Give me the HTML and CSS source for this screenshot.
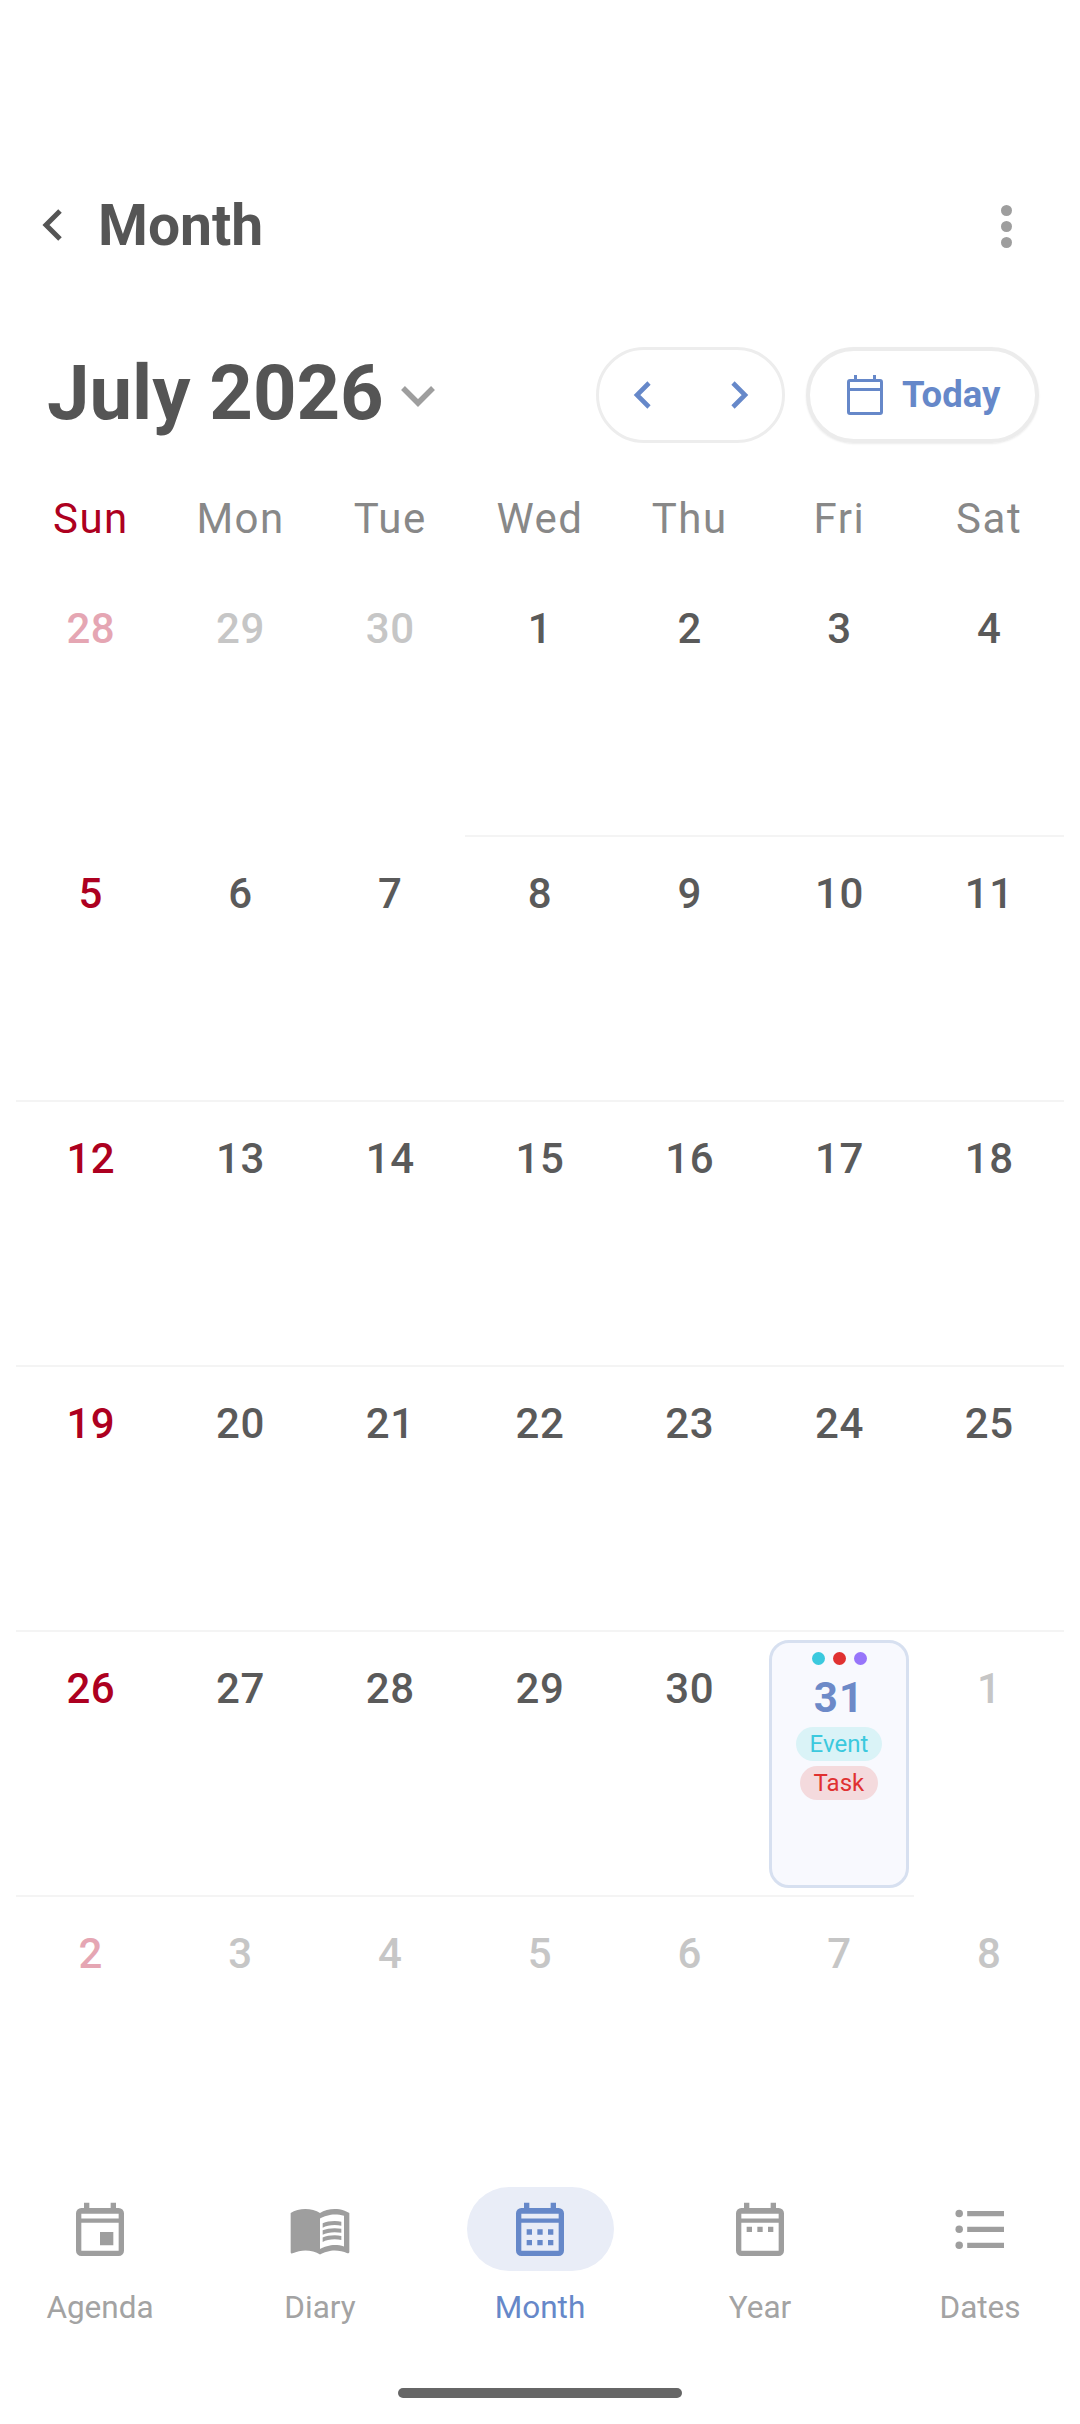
FILE: index.html
```html
<!DOCTYPE html>
<html lang="en">
<head>
<meta charset="utf-8">
<title>Month</title>
<link rel="stylesheet" href="styles.css">
</head>
<body>
<div class="app">
  <header class="titlebar">
    <svg class="back" viewBox="0 0 30 36"><path d="M19 3 5 17l14 14" fill="none" stroke="#555" stroke-width="5"/></svg>
    <h1 class="title">Month</h1>
    <div class="more"><i></i><i></i><i></i></div>
  </header>

  <section class="toolbar">
    <div class="month-pick">
      <span class="month-name">July 2026</span>
      <svg class="caret" viewBox="0 0 34 22"><path d="M2 3l15 15L32 3" fill="none" stroke="#9e9e9e" stroke-width="5.5"/></svg>
    </div>
    <div class="pager">
      <svg class="pg" viewBox="0 0 18 28"><path d="M16 2 4 14l12 12" fill="none" stroke="#6688c9" stroke-width="4.6"/></svg>
      <svg class="pg" viewBox="0 0 18 28"><path d="M2 2l12 12L2 26" fill="none" stroke="#6688c9" stroke-width="4.6"/></svg>
    </div>
    <div class="today">
      <svg class="today-ic" viewBox="0 0 36 40"><path fill-rule="evenodd" fill="#6688c9" d="M7 0h3v4h16V0h3v4h4a3 3 0 0 1 3 3v30a3 3 0 0 1-3 3H3a3 3 0 0 1-3-3V7a3 3 0 0 1 3-3h4zM3 7v6h30V7zM3 16v21h30V16z"/></svg>
      <span class="today-text">Today</span>
    </div>
  </section>

  <section class="weekdays">
    <span class="sun">Sun</span><span>Mon</span><span>Tue</span><span>Wed</span><span>Thu</span><span>Fri</span><span>Sat</span>
  </section>

  <section class="grid">
    <div class="cell nl sundim">28</div><div class="cell nl dim">29</div><div class="cell nl dim">30</div><div class="cell">1</div><div class="cell">2</div><div class="cell">3</div><div class="cell">4</div>
    <div class="cell sun">5</div><div class="cell">6</div><div class="cell">7</div><div class="cell">8</div><div class="cell">9</div><div class="cell">10</div><div class="cell">11</div>
    <div class="cell sun">12</div><div class="cell">13</div><div class="cell">14</div><div class="cell">15</div><div class="cell">16</div><div class="cell">17</div><div class="cell">18</div>
    <div class="cell sun">19</div><div class="cell">20</div><div class="cell">21</div><div class="cell">22</div><div class="cell">23</div><div class="cell">24</div><div class="cell">25</div>
    <div class="cell sun">26</div><div class="cell">27</div><div class="cell">28</div><div class="cell">29</div><div class="cell">30</div>
    <div class="cell has-card">
      <div class="card">
        <div class="dots"><i class="cyan"></i><i class="red"></i><i class="violet"></i></div>
        <div class="card-num">31</div>
        <span class="tag tag-event">Event</span>
        <span class="tag tag-task">Task</span>
      </div>
    </div>
    <div class="cell nl dim">1</div>
    <div class="cell nl sundim">2</div><div class="cell nl dim">3</div><div class="cell nl dim">4</div><div class="cell nl dim">5</div><div class="cell nl dim">6</div><div class="cell nl dim">7</div><div class="cell nl dim">8</div>
  </section>

  <nav class="nav">
    <div class="tab">
      <div class="ic-wrap"><svg class="ic" viewBox="0 0 24 24"><path fill-rule="evenodd" d="M6 1h2v2h8V1h2v2h1a2 2 0 0 1 2 2v14a2 2 0 0 1-2 2H5a2 2 0 0 1-2-2V5a2 2 0 0 1 2-2h1zM5 5.2v1.7h14V5.2zM5 8.5V19h14V8.5zM12 12h5v5h-5z"/></svg></div>
      <span>Agenda</span>
    </div>
    <div class="tab">
      <div class="ic-wrap"><svg class="ic" viewBox="0 0 24 24"><g transform="translate(0 -1.1)"><path d="M12 6C10.55 4.9 8.45 4.5 6.5 4.5S2.45 4.9 1 6v14.65c0 .25.25.5.5.5.1 0 .15-.05.25-.05C3.1 20.45 5.05 20 6.5 20c1.95 0 4.05.4 5.5 1.5z"/><path d="M21 5c-1.11-.35-2.33-.5-3.5-.5-1.95 0-4.05.4-5.5 1.5v15.5c1.35-.85 3.8-1.5 5.5-1.5 1.65 0 3.35.3 4.75 1.05.1.05.15.05.25.05.25 0 .5-.25.5-.5V6c-.6-.45-1.25-.75-2-1zm0 13.5c-1.1-.35-2.3-.5-3.5-.5-1.7 0-4.15.65-5.5 1.5V8c1.35-.85 3.8-1.5 5.5-1.5 1.2 0 2.4.15 3.5.5z"/><path d="M17.5 10.5c.88 0 1.73.09 2.5.26V9.24c-.79-.15-1.64-.24-2.5-.24-1.7 0-3.24.29-4.5.83v1.66c1.13-.64 2.7-.99 4.5-.99zM13 12.49v1.66c1.13-.64 2.7-.99 4.5-.99.88 0 1.73.09 2.5.26V11.9c-.79-.15-1.64-.24-2.5-.24-1.7 0-3.24.3-4.5.83zM17.5 14.33c-1.7 0-3.24.29-4.5.83v1.66c1.13-.64 2.7-.99 4.5-.99.88 0 1.73.09 2.5.26v-1.52c-.79-.16-1.64-.24-2.5-.24z"/></g></svg></div>
      <span>Diary</span>
    </div>
    <div class="tab active">
      <div class="ic-wrap"><svg class="ic" viewBox="0 0 24 24"><path fill-rule="evenodd" d="M6 1h2v2h8V1h2v2h1a2 2 0 0 1 2 2v14a2 2 0 0 1-2 2H5a2 2 0 0 1-2-2V5a2 2 0 0 1 2-2h1zM5 5.2v1.7h14V5.2zM5 8.5V19h14V8.5zM7 11h2v2H7zM11 11h2v2h-2zM15 11h2v2h-2zM7 15h2v2H7zM11 15h2v2h-2zM15 15h2v2h-2z"/></svg></div>
      <span>Month</span>
    </div>
    <div class="tab">
      <div class="ic-wrap"><svg class="ic" viewBox="0 0 24 24"><path fill-rule="evenodd" d="M6 1h2v2h8V1h2v2h1a2 2 0 0 1 2 2v14a2 2 0 0 1-2 2H5a2 2 0 0 1-2-2V5a2 2 0 0 1 2-2h1zM5 5.2v1.7h14V5.2zM5 8.5V19h14V8.5zM7 10h2v2H7zM11 10h2v2h-2zM15 10h2v2h-2z"/></svg></div>
      <span>Year</span>
    </div>
    <div class="tab">
      <div class="ic-wrap"><svg class="ic" viewBox="0 0 24 24"><circle cx="4.2" cy="5.1" r="1.4"/><circle cx="4.2" cy="11" r="1.4"/><circle cx="4.2" cy="17" r="1.4"/><path d="M7.2 4.1H21v2H7.2zM7.2 10H21v2H7.2zM7.2 16H21v2H7.2z"/></svg></div>
      <span>Dates</span>
    </div>
  </nav>
  <div class="home"></div>
</div>
</body>
</html>
```
FILE: styles.css
```css
* { box-sizing: border-box; }
html, body { margin: 0; padding: 0; background: #fff; }
body { font-family: Roboto, "Liberation Sans", sans-serif; color: #555; }
.app { width: 1080px; height: 2424px; display: flex; flex-direction: column; overflow: hidden; }

.titlebar { margin-top: 176px; height: 100px; display: flex; align-items: center; padding: 0 68px 0 41px; }
.back { width: 30px; height: 36px; flex: none; }
.title { margin: 0 0 0 27px; font-size: 57px; font-weight: 700; line-height: 100px; color: #555; flex: 1; }
.more { display: flex; flex-direction: column; gap: 5px; }
.more i { display: block; width: 11px; height: 11px; border-radius: 50%; background: #9e9e9e; }

.toolbar { margin-top: 71px; height: 96px; display: flex; align-items: center; padding: 0 41px 0 47px; }
.month-pick { display: flex; align-items: center; flex: 1; }
.month-name { font-size: 76px; font-weight: 700; line-height: 92px; margin-bottom: 4px; color: #555; }
.caret { width: 34px; height: 22px; margin-left: 17px; margin-top: 2px; }
.pager { width: 189.5px; height: 96px; border: 3px solid #ededed; border-radius: 48px; display: flex; align-items: center; justify-content: space-between; padding: 0 33px 0 34px; }
.pg { width: 18px; height: 28px; }
.today { width: 233px; height: 96px; margin-left: 21px; border: 4px solid #ececec; border-radius: 48px; box-shadow: 0 1px 2px rgba(0,0,0,.08); display: flex; align-items: center; padding-left: 37px; color: #6688c9; font-size: 36.5px; font-weight: 700; }
.today-ic { width: 36px; height: 40px; margin-right: 19px; }
.today-text { margin-bottom: 2px; }

.weekdays { margin-top: 45.5px; height: 60px; margin-bottom: 23px; padding: 0 16px; display: grid; grid-template-columns: repeat(7, 1fr); text-align: center; font-size: 42px; line-height: 60px; letter-spacing: 1.5px; color: #888; }
.weekdays .sun { color: #ad0020; }

.grid { height: 1588.5px; padding: 0 16px; display: grid; grid-template-columns: repeat(7, 1fr); grid-auto-rows: 265px; }
.cell { border-bottom: 2px solid #f4f4f4; padding-top: 32px; text-align: center; font-size: 42px; line-height: 50px; font-weight: 500; letter-spacing: .6px; color: #5a5a5a; }
.cell.nl { border-bottom-color: transparent; }
.cell.sun { color: #ad0020; }
.cell.dim { color: #c6c6c6; }
.cell.sundim { color: #e5a6b3; }

.has-card { padding: 8px 5px 0 4px; }
.card { height: 248px; border: 3px solid #d7e0f0; border-radius: 20px; background: #f8f9fe; display: flex; flex-direction: column; align-items: center; padding-top: 9px; font-weight: 400; letter-spacing: 0; }
.dots { display: flex; gap: 8px; height: 13px; margin-left: 2px; }
.dots i { display: block; width: 13px; height: 13px; border-radius: 50%; }
.cyan { background: #3bc9de; }
.red { background: #e03131; }
.violet { background: #9775fa; }
.card-num { margin-top: 11px; font-size: 42px; line-height: 44px; font-weight: 700; letter-spacing: 1px; color: #6d8ac8; }
.tag { height: 34px; padding: 0 14px; border-radius: 17px; font-size: 24px; line-height: 34px; margin-bottom: 5px; }
.tag-event { margin-top: 7px; background: #daf3f7; color: #3bc9de; }
.tag-task { background: #f4dadd; color: #e03131; }

.nav { height: 168px; padding-top: 27px; display: flex; justify-content: center; gap: 40px; flex: none; }
.tab { width: 180px; display: flex; flex-direction: column; align-items: center; color: #a3a3a3; font-size: 31.5px; line-height: 40px; }
.ic-wrap { width: 147px; height: 84px; border-radius: 42px; display: flex; justify-content: center; padding-top: 13px; margin-bottom: 17px; }
.ic { width: 64px; height: 64px; fill: #9e9e9e; }
.tab.active { color: #6688c9; }
.tab.active .ic-wrap { background: #e9edf7; }
.tab.active .ic { fill: #6688c9; }

.home { width: 284px; height: 10px; border-radius: 5px; background: #666; margin: 60px auto 0; flex: none; }
```
